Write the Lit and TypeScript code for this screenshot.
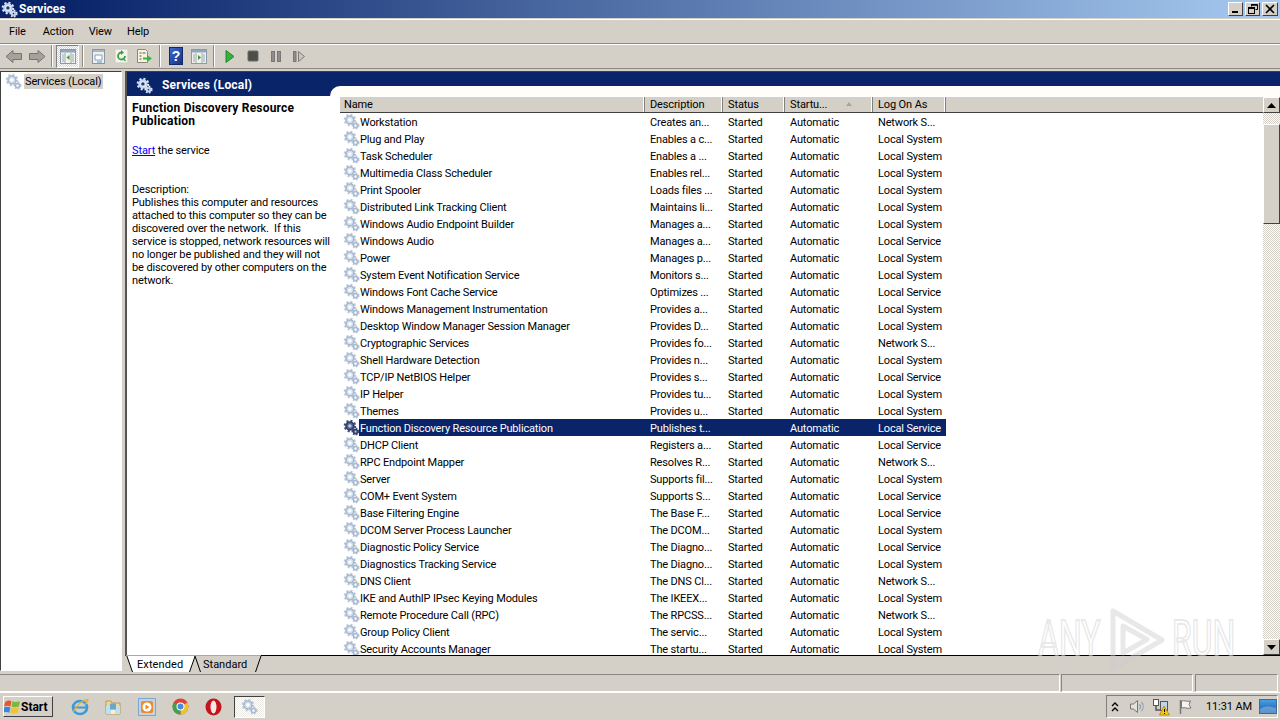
import { LitElement, html, css, svg } from "lit";
import { customElement } from "lit/decorators.js";

const rows: string[][] = [
  ["Workstation","Creates an...","Started","Automatic","Network S..."],
  ["Plug and Play","Enables a c...","Started","Automatic","Local System"],
  ["Task Scheduler","Enables a ...","Started","Automatic","Local System"],
  ["Multimedia Class Scheduler","Enables rel...","Started","Automatic","Local System"],
  ["Print Spooler","Loads files ...","Started","Automatic","Local System"],
  ["Distributed Link Tracking Client","Maintains li...","Started","Automatic","Local System"],
  ["Windows Audio Endpoint Builder","Manages a...","Started","Automatic","Local System"],
  ["Windows Audio","Manages a...","Started","Automatic","Local Service"],
  ["Power","Manages p...","Started","Automatic","Local System"],
  ["System Event Notification Service","Monitors s...","Started","Automatic","Local System"],
  ["Windows Font Cache Service","Optimizes ...","Started","Automatic","Local Service"],
  ["Windows Management Instrumentation","Provides a...","Started","Automatic","Local System"],
  ["Desktop Window Manager Session Manager","Provides D...","Started","Automatic","Local System"],
  ["Cryptographic Services","Provides fo...","Started","Automatic","Network S..."],
  ["Shell Hardware Detection","Provides n...","Started","Automatic","Local System"],
  ["TCP/IP NetBIOS Helper","Provides s...","Started","Automatic","Local Service"],
  ["IP Helper","Provides tu...","Started","Automatic","Local System"],
  ["Themes","Provides u...","Started","Automatic","Local System"],
  ["Function Discovery Resource Publication","Publishes t...","","Automatic","Local Service"],
  ["DHCP Client","Registers a...","Started","Automatic","Local Service"],
  ["RPC Endpoint Mapper","Resolves R...","Started","Automatic","Network S..."],
  ["Server","Supports fil...","Started","Automatic","Local System"],
  ["COM+ Event System","Supports S...","Started","Automatic","Local Service"],
  ["Base Filtering Engine","The Base F...","Started","Automatic","Local Service"],
  ["DCOM Server Process Launcher","The DCOM...","Started","Automatic","Local System"],
  ["Diagnostic Policy Service","The Diagno...","Started","Automatic","Local Service"],
  ["Diagnostics Tracking Service","The Diagno...","Started","Automatic","Local System"],
  ["DNS Client","The DNS Cl...","Started","Automatic","Network S..."],
  ["IKE and AuthIP IPsec Keying Modules","The IKEEX...","Started","Automatic","Local System"],
  ["Remote Procedure Call (RPC)","The RPCSS...","Started","Automatic","Network S..."],
  ["Group Policy Client","The servic...","Started","Automatic","Local System"],
  ["Security Accounts Manager","The startu...","Started","Automatic","Local System"],
];
const SELECTED = 18;

const gear = (size: number, c1: string, c2: string, hub: string, hole: string) => html`<svg width=${size} height=${size} viewBox="0 0 16 16">
  <circle cx="6.5" cy="6.5" r="4.6" fill="none" stroke=${c1} stroke-width="2.6" stroke-dasharray="1.8 1.8"/>
  <circle cx="6.5" cy="6.5" r="3.7" fill=${hub} stroke=${c2} stroke-width="1.5"/>
  <circle cx="6.5" cy="6.5" r="1.6" fill=${hole}/>
  <circle cx="11.8" cy="11.8" r="2.9" fill="none" stroke=${c1} stroke-width="1.8" stroke-dasharray="1.4 1.3"/>
  <circle cx="11.8" cy="11.8" r="2.1" fill=${hub} stroke=${c2} stroke-width="1.2"/>
  <circle cx="11.8" cy="11.8" r=".8" fill=${hole}/>
</svg>`;
const rowGear = () => gear(17, "#b9c7da", "#a6b8d0", "#d5dfec", "#ffffff");
const selGear = () => gear(17, "#3f4d78", "#2e3c66", "#55638c", "#c3cce0");
const headGear = () => gear(17, "#e8eef8", "#c4d2ea", "#dbe5f4", "#1b3a7a");

const winIcon = (arrow: "l" | "r") => svg`<svg width="18" height="17" viewBox="0 0 18 17">
  <rect x="1.5" y="1.5" width="15" height="14" fill="#f2f2ea" stroke="#8a9aa8"/>
  <rect x="2" y="2" width="14" height="2.5" fill="#8fa6bf"/>
  <path d="M6 5v10M12 5v10" stroke="#9aa8b4"/>
  <path d="M3 7h2M3 9h2M3 11h2M3 13h2M13 7h2M13 9h2M13 11h2M13 13h2" stroke="#9aa8b4"/>
  ${arrow === "l" ? svg`<path d="M10.5 7v5L7.5 9.5z" fill="#3c9a3c"/>` : svg`<path d="M8 7v5l3-2.5z" fill="#3c9a3c"/>`}
</svg>`;

const icons = {
  back: html`<svg width="18" height="15" viewBox="0 0 18 15"><path d="M1 7.5 8 1.5v3h8.5v6H8v3z" fill="#a5a29b" stroke="#77746e"/></svg>`,
  fwd: html`<svg width="18" height="15" viewBox="0 0 18 15"><path d="M17 7.5 10 1.5v3H1.5v6H10v3z" fill="#a5a29b" stroke="#77746e"/></svg>`,
  show: winIcon("l"),
  doc: html`<svg width="15" height="17" viewBox="0 0 15 17"><rect x="1.5" y="1.5" width="12" height="14" fill="#eef0ee" stroke="#8b98a4"/><rect x="2" y="2" width="11" height="2" fill="#aab6c2"/><path d="M4 7h7v5H4z" fill="#fff" stroke="#7fa3c4"/><path d="M6 14h5" stroke="#48a0d0"/></svg>`,
  refresh: html`<svg width="15" height="16" viewBox="0 0 15 16"><rect x="1" y="1" width="13" height="14" fill="#f4f4ec" stroke="#c9c9c0"/><path d="M11 8A3.500 3.500 0 1 1 7.500 4.500" fill="none" stroke="#3aa047" stroke-width="1.800"/><path d="M7 2 10 4.500 7 7z" fill="#3aa047"/><path d="M9 10.500l2.500 2.500" stroke="#3aa047" stroke-width="1.300"/></svg>`,
  exp: html`<svg width="17" height="16" viewBox="0 0 17 16"><path d="M1.5 1.5h8l2 2v11h-10z" fill="#f6f3df" stroke="#8a8a78"/><path d="M3.5 5h2M3.5 8h2M3.5 11h2M6.5 5h3" stroke="#57574c"/><path d="M7 9.5h4V7l5 3.5-5 3.5v-2.500H7z" fill="#3db04a"/></svg>`,
  help: html`<svg width="14" height="18" viewBox="0 0 14 18"><defs><linearGradient id="hg" x1="0" y1="0" x2="1" y2="1"><stop offset="0" stop-color="#3f6cd0"/><stop offset="1" stop-color="#162f80"/></linearGradient></defs><rect x=".5" y=".5" width="13" height="17" fill="url(#hg)" stroke="#14286c"/><text x="7" y="14" text-anchor="middle" font-family="Liberation Sans" font-weight="700" font-size="14" fill="#fff">?</text></svg>`,
  win: winIcon("r"),
  play: html`<svg width="10" height="13" viewBox="0 0 10 13"><path d="M1 .5v12l8-6z" fill="#37b03e" stroke="#1f8a2c"/></svg>`,
  stop: html`<svg width="12" height="12" viewBox="0 0 12 12"><rect x="1" y="1" width="10" height="10" rx="1" fill="#4c4c48" stroke="#6a6a66"/></svg>`,
  pause: html`<svg width="12" height="13" viewBox="0 0 12 13"><rect x="1.500" y="1.500" width="3" height="10" fill="#8f8d87" stroke="#777"/><rect x="7.500" y="1.500" width="3" height="10" fill="#8f8d87" stroke="#777"/></svg>`,
  resume: html`<svg width="14" height="13" viewBox="0 0 14 13"><rect x="1.500" y="1.500" width="2.500" height="10" fill="#8f8d87" stroke="#777"/><path d="M6.500 1.500v10l6-5z" fill="#c9c6bf" stroke="#807e78"/></svg>`,
};

@customElement("app-root")
export class AppRoot extends LitElement {
  static styles = css`
    :host { display: block; width: 1280px; height: 720px; position: relative; overflow: hidden; background: #d4d0c8;
      font-family: Roboto, "Liberation Sans", Arial, sans-serif; font-size: 11px; letter-spacing: -.12px; color: #000; }
    * { box-sizing: border-box; }
    .app { display: flex; flex-direction: column; height: 720px; }
    .title { height: 18px; flex: none; background: linear-gradient(90deg, #0a246a 0%, #0a246a 5%, #a6caf0 100%); color: #fff; display: flex; align-items: center; padding: 0 0 0 1px; gap: 1px; font-weight: 700; font-size: 12px; letter-spacing: 0; }
    .title .name { flex: 1; }
    .winbtns { display: flex; gap: 2px; padding-right: 2px; }
    .winbtn { width: 15px; height: 14px; background: #d4d0c8; border: 1px solid; border-color: #fff #404040 #404040 #fff; display: flex; align-items: center; justify-content: center; }
    .winbtn:last-child { width: 16px; }
    .menu { height: 25px; margin-top: 1px; flex: none; border-top: 1px solid #fff; border-bottom: 1px solid #8d8a84; display: flex; align-items: center; padding-left: 2px; }
    .menu span { padding: 0 7px; }
    .menu span + span { margin-left: 1px; }
    .menu span:first-child { padding-right: 9px; }
    .tools { height: 25px; flex: none; border-top: 1px solid #fff; border-bottom: 1px solid #8d8a84; display: flex; align-items: center; padding: 0 0 1px 2px; }
    .tb { width: 23px; height: 23px; display: flex; align-items: center; justify-content: center; }
    .tb.on { border: 1px solid; border-color: #808080 #fff #fff #808080; background: repeating-conic-gradient(#fff 0 25%, #d4d0c8 0 50%) 0 0 / 2px 2px; }
    .sep { width: 8px; height: 22px; display: flex; justify-content: center; }
    .sep i { width: 2px; height: 100%; border-left: 1px solid #8d8a84; border-right: 1px solid #fff; }
    .main { flex: 1; display: flex; min-height: 0; padding: 2px 0 0 0; gap: 3px; }
    .tree { width: 122px; height: 600px; flex: none; background: #fff; border: 1px solid; border-color: #404040 #fff #fff #404040; padding: 1px 0 0 4px; display: flex; align-items: flex-start; gap: 2px; }
    .tree .lab { background: #d4d0c8; padding: 0 2px 0 1px; line-height: 15px; height: 15px; margin-top: 1px; }
    .right { flex: 1; min-width: 0; display: flex; flex-direction: column; }
    .pane { height: 585px; flex: none; background: #fff; border-top: 1px solid #404040; border-left: 2px solid #555; border-bottom: 1px solid #000; display: flex; flex-direction: column; overflow: hidden; }
    .phead { height: 24px; flex: none; display: flex; background: #0a246a; }
    .phead .pt { width: 203px; flex: none; color: #fff; font-weight: 700; font-size: 12px; letter-spacing: .2px; display: flex; align-items: center; gap: 9px; padding: 2px 0 0 9px; }
    .phead .pr { flex: 1; padding-top: 14px; display: flex; }
    .phead .pr i { flex: 1; background: #fffef8; border-top-left-radius: 11px; }
    .pbody { flex: 1; min-height: 0; display: flex; }
    .desc { width: 213px; flex: none; padding: 6px 0 0 5px; line-height: 13px; }
    .desc b { display: block; font-size: 12px; letter-spacing: .2px; }
    .desc a { color: #0000ff; text-decoration: underline; }
    .desc .act { margin-top: 16px; }
    .desc .dl { margin-top: 26px; }
    .desc .para { white-space: pre-wrap; }
    .list { flex: 1; min-width: 0; display: flex; flex-direction: column; overflow: hidden; margin-top: 1px; }
    .lhead { height: 16px; flex: none; background: #d4d0c8; border-bottom: 1px solid #404040; display: flex; }
    .lhead div { height: 15px; line-height: 16px; padding-left: 5px; border-right: 1px solid #808080; box-shadow: inset -1px 0 0 #fff; position: relative; }
    .lhead div.hc0 { padding-left: 4px; }
    .sort { position: absolute; left: 61px; top: 5px; width: 0; height: 0; border: 3.500px solid transparent; border-top: 0; border-bottom: 4px solid #a8a59e; }
    .lbody { flex: 1; min-height: 0; overflow: hidden; }
    .row { display: flex; height: 17px; line-height: 19px; width: 606px; white-space: nowrap; letter-spacing: -.16px; }
    .c0, .c1, .c2, .c3, .c4 { flex: none; padding-left: 5px; }
    .c0 { width: 305px; padding-left: 3px; display: flex; gap: 0; }
    .c0 svg { flex: none; }
    .c1, .hc1 { width: 78px; } .c2, .hc2 { width: 62px; } .c3, .hc3 { width: 88px; } .c4, .hc4 { width: 73px; }
    .hc0 { width: 305px; }
    .row.sel .cell { background: #0a246a; color: #fff; }
    .row.sel .c0 { padding-left: 0; }
    .row.sel .c0 .ic { background: #fff; padding-left: 3px; width: 19px; flex: none; }
    .row.sel .c0 .tx { flex: 1; background: #0a246a; padding-left: 1px; }
    .c0 .ic { width: 17px; flex: none; height: 17px; }
    .scroll { width: 17px; flex: none; display: flex; flex-direction: column; margin-top: 1px; background: repeating-conic-gradient(#fff 0 25%, #d4d0c8 0 50%) 0 0 / 2px 2px; }
    .sb { height: 16px; flex: none; background: #d4d0c8; border: 1px solid; border-color: #fff #404040 #404040 #fff; display: flex; align-items: center; justify-content: center; }
    .thumb { height: 100px; margin-top: 11px; flex: none; background: #d4d0c8; border: 1px solid; border-color: #fff #404040 #404040 #fff; }
    .gap { flex: 1; }
    .tabs { height: 17px; flex: none; display: flex; padding-left: 1px; position: relative; margin-top: -1px; letter-spacing: 0; }
    .tab { position: relative; height: 17px; line-height: 19px; }
    .tab svg { position: absolute; left: 0; top: 0; }
    .tab span { position: relative; }
    .t1 { width: 67px; padding-left: 11px; letter-spacing: .1px; }
    .t2 { width: 68px; padding-left: 10px; color: #000; }
    .status { height: 20px; flex: none; display: flex; padding-top: 2px; }
    .status div { height: 18px; border: 1px solid; border-color: #8a8782 #fff #fff #8a8782; }
    .s1 { width: 1060px; border-left: 0 !important; } .s2 { width: 132px; margin-left: 1px; } .s3 { flex: 1; margin-left: 2px; margin-right: 2px; }
    .task { height: 28px; flex: none; border-top: 1px solid #fff; display: flex; align-items: center; padding: 0 2px 0 3px; }
    .start { width: 50px; height: 21px; background: #d4d0c8; border: 1px solid; border-color: #fff #404040 #404040 #fff; display: flex; align-items: center; gap: 0; padding-left: 0; font-weight: 700; font-size: 12px; letter-spacing: 0; }
    .ql { display: flex; margin-left: 10px; }
    .ql div { width: 33.500px; height: 24px; display: flex; align-items: center; justify-content: center; }
    .tsk { width: 31px; height: 22px; margin-left: 3px; border: 1px solid; border-color: #404040 #fff #fff #404040; background: repeating-conic-gradient(#fff 0 25%, #eceae5 0 50%) 0 0 / 2px 2px; display: flex; align-items: center; justify-content: center; }
    .fill { flex: 1; }
    .tray { width: 172px; height: 23px; border: 1px solid; border-color: #808080 #fff #fff #808080; display: flex; align-items: center; padding-left: 3px; }
    .tray svg { flex: none; }
    .clock { margin-left: 11px; width: 53px; font-size: 11px; }
    .wm { position: absolute; left: 1038px; top: 606px; width: 196px; height: 66px; pointer-events: none; display: flex; align-items: center; justify-content: space-between; }
    .wm span { display: inline-block; width: 62px; font-size: 50px; font-weight: 400; letter-spacing: 0; white-space: nowrap; color: rgba(255,255,255,.3); -webkit-text-stroke: 2px rgba(205,205,205,.45); line-height: 66px; transform: scaleX(.64); transform-origin: left center; }
    .wm svg { flex: none; }
  `;

  render() {
    const win = (b: unknown) => html`<div class="winbtn">${b}</div>`;
    return html`<div class="app">
      <div class="title">
        ${gear(17, "#e8eef8", "#bcd0ee", "#dbe5f4", "#1b3a7a")}
        <span class="name">Services</span>
        <div class="winbtns">
          ${win(svg`<svg width="10" height="10" viewBox="0 0 10 10"><rect x="1" y="7" width="6" height="2"/></svg>`)}
          ${win(svg`<svg width="10" height="10" viewBox="0 0 10 10"><path d="M3.500 2.500V.5h6v5h-2" fill="none" stroke="#000"/><path d="M3 1h6" stroke="#000" stroke-width="1.500"/><rect x=".5" y="3.500" width="6" height="6" fill="none" stroke="#000"/><path d="M0 4.500h6" stroke="#000"/></svg>`)}
          ${win(svg`<svg width="10" height="10" viewBox="0 0 10 10"><path d="M1 1l8 8M9 1l-8 8" stroke="#000" stroke-width="1.600"/></svg>`)}
        </div>
      </div>
      <div class="menu"><span>File</span><span>Action</span><span>View</span><span>Help</span></div>
      <div class="tools">
        <div class="tb">${icons.back}</div><div class="tb">${icons.fwd}</div>
        <div class="sep"><i></i></div>
        <div class="tb on">${icons.show}</div>
        <div class="sep"><i></i></div>
        <div class="tb">${icons.doc}</div><div class="tb">${icons.refresh}</div><div class="tb">${icons.exp}</div>
        <div class="sep"><i></i></div>
        <div class="tb">${icons.help}</div><div class="tb">${icons.win}</div>
        <div class="sep"><i></i></div>
        <div class="tb">${icons.play}</div><div class="tb">${icons.stop}</div><div class="tb">${icons.pause}</div><div class="tb">${icons.resume}</div>
      </div>
      <div class="main">
        <div class="tree">${rowGear()}<span class="lab">Services (Local)</span></div>
        <div class="right">
          <div class="pane">
            <div class="phead">
              <div class="pt">${headGear()}<span>Services (Local)</span></div>
              <div class="pr"><i></i></div>
            </div>
            <div class="pbody">
              <div class="desc">
                <b>Function Discovery Resource<br>Publication</b>
                <div class="act"><a>Start</a> the service</div>
                <div class="dl">Description:</div>
                <div class="para">Publishes this computer and resources
attached to this computer so they can be
discovered over the network.  If this
service is stopped, network resources will
no longer be published and they will not
be discovered by other computers on the
network.</div>
              </div>
              <div class="list">
                <div class="lhead">
                  <div class="hc0">Name</div><div class="hc1">Description</div><div class="hc2">Status</div>
                  <div class="hc3">Startu...<span class="sort"></span></div><div class="hc4">Log On As</div>
                </div>
                <div class="lbody">
                  ${rows.map((r, i) => i === SELECTED
                    ? html`<div class="row sel"><div class="c0 cell"><span class="ic">${selGear()}</span><span class="tx">${r[0]}</span></div><div class="c1 cell">${r[1]}</div><div class="c2 cell">${r[2]}</div><div class="c3 cell">${r[3]}</div><div class="c4 cell">${r[4]}</div></div>`
                    : html`<div class="row"><div class="c0"><span class="ic">${rowGear()}</span><span class="tx">${r[0]}</span></div><div class="c1">${r[1]}</div><div class="c2">${r[2]}</div><div class="c3">${r[3]}</div><div class="c4">${r[4]}</div></div>`)}
                </div>
              </div>
              <div class="scroll">
                <div class="sb"><svg width="9" height="5" viewBox="0 0 9 5"><path d="M4.500 0 9 5H0z"/></svg></div>
                <div class="thumb"></div>
                <div class="gap"></div>
                <div class="sb"><svg width="9" height="5" viewBox="0 0 9 5"><path d="M4.500 5 9 0H0z"/></svg></div>
              </div>
            </div>
          </div>
          <div class="tabs">
            <div class="tab t1"><svg width="72" height="18" viewBox="0 0 72 18"><path d="M.5 0 6.500 17h57L69.500 0z" fill="#fff"/><path d="M.5 0 6.500 17M63.500 17 69.500 0" fill="none" stroke="#000"/><path d="M0 .5h70" stroke="#aaa8a2"/></svg><span>Extended</span></div>
            <div class="tab t2"><svg width="70" height="18" viewBox="0 0 70 18"><path d="M2 1h66l-5.500 16H8z" fill="#d4d0c8"/><path d="M2 1l5.500 16M62.500 17 68 1" fill="none" stroke="#000"/><path d="M0 .5h68" stroke="#aaa8a2"/></svg><span>Standard</span></div>
          </div>
        </div>
      </div>
      <div class="status"><div class="s1"></div><div class="s2"></div><div class="s3"></div></div>
      <div class="task">
        <div class="start">
          <svg width="17" height="16" viewBox="0 0 16 15"><path d="M1 3c2-2 4-2 6-1L6 7C4 6 2 6 0 7z" fill="#e8562a"/><path d="M8 2c2 1 4 1 7 0l-1 5c-3 1-5 1-7 0z" fill="#7cb83e"/><path d="M0 8c2-1 4-1 6 0l-1 5c-2-1-4-1-6 0z" fill="#3a86d8"/><path d="M7 8c2 1 4 1 7 0l-1 5c-3 1-5 1-7 0z" fill="#f2c230"/></svg>
          <span>Start</span>
        </div>
        <div class="ql">
          <div><svg width="18" height="18" viewBox="0 0 18 18"><ellipse cx="9" cy="9.500" rx="7" ry="6.500" fill="none" stroke="#3d9ad8" stroke-width="2.600"/><path d="M3 9.500h12" stroke="#3d9ad8" stroke-width="2"/><path d="M2 14C6 7 12 2 17 1.500c-.5 2-1.500 3.500-3 5" fill="none" stroke="#e0b040" stroke-width="1.300"/></svg></div>
          <div><svg width="18" height="16" viewBox="0 0 18 16"><path d="M2 2h5l1 2h8v11H2z" fill="#f3d98a" stroke="#b89a50"/><path d="M2 7h14v8H2z" fill="#bfe0ef"/><rect x="6" y="4.500" width="6" height="6" fill="#6aa7c7" /><path d="M7 15v-4h4v4" fill="#f7efcb"/></svg></div>
          <div><svg width="18" height="18" viewBox="0 0 18 18"><rect x=".5" y=".5" width="17" height="17" fill="#bcd4ec" stroke="#7fa6cf"/><rect x="3" y="3" width="12" height="12" rx="2" fill="#f08a24"/><circle cx="9" cy="9" r="4.500" fill="#fff"/><path d="M7.500 6.500v5l4-2.500z" fill="#f08a24"/></svg></div>
          <div><svg width="17" height="17" viewBox="0 0 17 17"><circle cx="8.500" cy="8.500" r="8" fill="#d9433a"/><path d="M8.500 8.500 15.400 4.500A8 8 0 0 1 8.500 16.500z" fill="#f2c230"/><path d="M8.500 8.500 1.600 4.500 A8 8 0 0 0 8.500 16.500z" fill="#3fa34d"/><circle cx="8.500" cy="8.500" r="4" fill="#fff"/><circle cx="8.500" cy="8.500" r="3" fill="#4a8ae0"/></svg></div>
          <div><svg width="17" height="18" viewBox="0 0 17 18"><ellipse cx="8.500" cy="9" rx="8" ry="8.500" fill="#c3151c"/><ellipse cx="8.500" cy="9" rx="3" ry="6.500" fill="#f6e8e8"/></svg></div>
        </div>
        <div class="tsk">${rowGear()}</div>
        <div class="fill"></div>
        <div class="tray">
          <svg width="10" height="12" viewBox="0 0 10 12" style="margin-right:9px"><path d="M2 5l3-3 3 3M2 10l3-3 3 3" fill="none" stroke="#000" stroke-width="1.300"/></svg>
          <svg width="17" height="15" viewBox="0 0 17 15" style="margin-right:6px"><path d="M1.500 5h3l4-3.500v12l-4-3.500h-3z" fill="#e4e2dc" stroke="#77756f"/><path d="M10.500 5a4 4 0 0 1 0 5M12.500 3a7 7 0 0 1 0 9" fill="none" stroke="#8fa0b5" stroke-width="1.200"/></svg>
          <svg width="18" height="18" viewBox="0 0 18 18" style="margin-right:8px"><rect x="1.500" y="1.500" width="5" height="6" fill="#fff" stroke="#555"/><path d="M4 7.500V12h5" fill="none" stroke="#555" stroke-width="1.500"/><rect x="8.500" y="3.500" width="7" height="9" fill="#bcd4ec" stroke="#555"/><path d="M12 8 17.500 17h-10z" fill="#f5c518" stroke="#a07a00" stroke-width=".7"/><path d="M12.500 11v3M12.500 15v1" stroke="#000"/></svg>
          <svg width="17" height="16" viewBox="0 0 17 16"><path d="M2.500 1v14" stroke="#777" stroke-width="1.500"/><path d="M3.500 2c3-1 5 1 9 0l-1.500 3.500L13 9c-4 1-6-1-9.500 0z" fill="#f4f4f0" stroke="#777"/></svg>
          <span class="clock">11:31 AM</span>
          <svg width="18" height="15" viewBox="0 0 18 15"><defs><linearGradient id="dk" x1="0" y1="0" x2="0" y2="1"><stop offset="0" stop-color="#4aa0e6"/><stop offset="1" stop-color="#1858a8"/></linearGradient></defs><rect x=".5" y=".5" width="17" height="14" fill="url(#dk)" stroke="#3c6a9c"/><path d="M1 10c5-3 10-3 16-1v5H1z" fill="#8ab8dc" opacity=".6"/></svg>
        </div>
      </div>
    </div>
    <div class="wm">
      <span>ANY</span>
      <svg width="62" height="66" viewBox="0 0 62 66"><path d="M8 5 57 34 8 63zM18 20v27l24-13.500z" fill="none" stroke="rgba(205,205,205,.45)" stroke-width="5" stroke-linejoin="round"/></svg>
      <span>RUN</span>
    </div>`;
  }
}
